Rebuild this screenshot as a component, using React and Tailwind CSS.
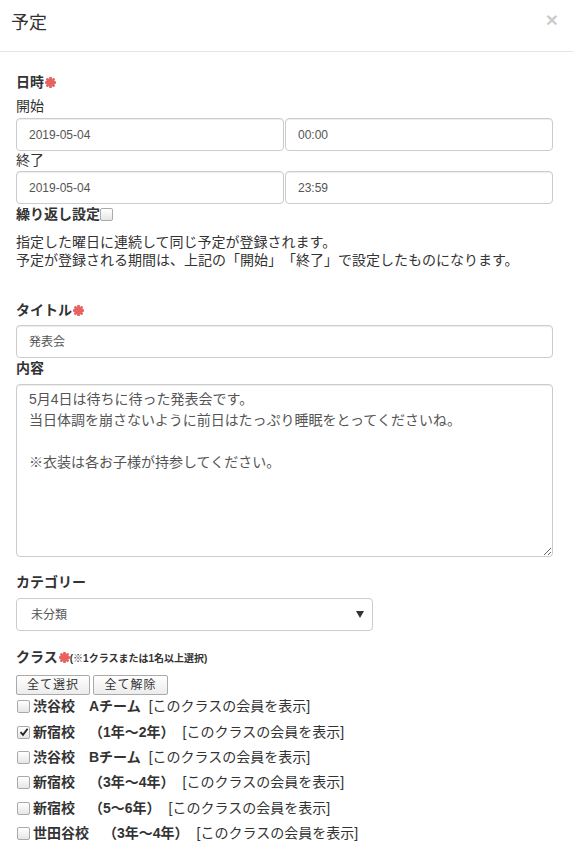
import { useState } from 'react';

const FONT = '"Liberation Sans", "Noto Sans CJK JP", sans-serif';

// 必須マーク
function Required() {
  return (
    <svg width="11" height="11" viewBox="0 0 10 10" className="inline-block align-[-1px] ml-[1px]">
      <g stroke="#e8625f" strokeWidth="2.6" strokeLinecap="round">
        <line x1="5" y1="1" x2="5" y2="9" />
        <line x1="1" y1="5" x2="9" y2="5" />
        <line x1="2.2" y1="2.2" x2="7.8" y2="7.8" />
        <line x1="7.8" y1="2.2" x2="2.2" y2="7.8" />
      </g>
    </svg>
  );
}

function Box({ checked, onClick }) {
  return (
    <span
      onClick={onClick}
      className="inline-flex items-center justify-center w-[13px] h-[13px] border border-[#aaa] rounded-[2px] bg-gradient-to-b from-white to-[#e6e6e6] shrink-0"
    >
      {checked && (
        <svg width="10" height="10" viewBox="0 0 10 10">
          <path d="M1.5 5.2 L4 7.8 L8.6 1.8" fill="none" stroke="#222" strokeWidth="1.8" />
        </svg>
      )}
    </span>
  );
}

function TextInput({ value }) {
  return (
    <div className="h-[33px] border border-[#ccc] rounded-[4px] shadow-[inset_0_1px_1px_rgba(0,0,0,0.075)] flex items-center pl-[12px] text-[12px] text-[#555] bg-white">
      {value}
    </div>
  );
}

const classes = [
  { name: '渋谷校　Aチーム', checked: false },
  { name: '新宿校　（1年～2年）', checked: true },
  { name: '渋谷校　Bチーム', checked: false },
  { name: '新宿校　（3年～4年）', checked: false },
  { name: '新宿校　（5～6年）', checked: false },
  { name: '世田谷校　（3年～4年）', checked: false },
];

export default function App() {
  const [repeat, setRepeat] = useState(false);
  const [checks, setChecks] = useState(classes.map((c) => c.checked));

  const toggle = (i) => setChecks((prev) => prev.map((v, j) => (j === i ? !v : v)));

  return (
    <div
      className="w-[573px] h-[844px] bg-white text-[#333] overflow-hidden [text-spacing-trim:space-all]"
      style={{ fontFamily: FONT }}
    >
      {/* header */}
      <div className="h-[52px] border-b border-[#e5e5e5] flex items-center justify-between pl-[11px] pr-[15px]">
        <h1 className="text-[18px] leading-[20px] -mt-[6px]">予定</h1>
        <span className="text-[21px] font-bold leading-none text-black opacity-20 -mt-[12px]">×</span>
      </div>

      <div className="pl-4 pr-5 pt-[20px]">
        <div className="text-[14px] leading-[20px] font-bold">日時<Required /></div>
        <div className="text-[14px] leading-[20px] mt-[4px]">開始</div>
        <div className="grid grid-cols-2 gap-[1px] mt-[2px]">
          <TextInput value="2019-05-04" />
          <TextInput value="00:00" />
        </div>
        <div className="text-[14px] leading-[18px] mt-0">終了</div>
        <div className="grid grid-cols-2 gap-[1px] mt-[2px]">
          <TextInput value="2019-05-04" />
          <TextInput value="23:59" />
        </div>
        <div className="text-[14px] leading-[20px] font-bold flex items-center">
          繰り返し設定<Box checked={repeat} onClick={() => setRepeat(!repeat)} />
        </div>
        <p className="text-[14px] leading-[18px] mt-[9px]">
          指定した曜日に連続して同じ予定が登録されます。<br />
          予定が登録される期間は、上記の「開始」「終了」で設定したものになります。
        </p>

        <div className="text-[14px] leading-[20px] font-bold mt-[31px]">タイトル<Required /></div>
        <div className="mt-[5px]">
          <TextInput value="発表会" />
        </div>
        <div className="text-[14px] leading-[20px] font-bold">内容</div>
        <textarea
          readOnly
          defaultValue={'5月4日は待ちに待った発表会です。\n当日体調を崩さないように前日はたっぷり睡眠をとってくださいね。\n\n※衣装は各お子様が持参してください。'}
          className="block w-full h-[173px] mt-[6px] border border-[#ccc] rounded-[4px] shadow-[inset_0_1px_1px_rgba(0,0,0,0.075)] px-[12px] pt-[4px] text-[14px] leading-[21px] text-[#555] outline-none [text-spacing-trim:space-all]"
          style={{ fontFamily: FONT }}
        />

        <div className="text-[14px] leading-[20px] font-bold mt-[15px]">カテゴリー</div>
        <div className="w-[357px] h-[33px] mt-[6px] border border-[#ccc] rounded-[4px] flex items-center justify-between pl-[14px] pr-[8px] text-[12px] text-[#555]">
          <span>未分類</span>
          <svg width="8" height="7" viewBox="0 0 8 7">
            <path d="M0 0 H8 L4 7 Z" fill="#333" />
          </svg>
        </div>

        <div className="text-[14px] leading-[20px] font-bold mt-[16px]">
          クラス<Required />
          <span className="text-[10px]">(※1クラスまたは1名以上選択)</span>
        </div>
        <div className="flex gap-[3px] mt-[6px]">
          <button className="w-[74px] h-[20px] border border-[#aaa] rounded-[2px] bg-gradient-to-b from-white to-[#ececec] text-[12px] leading-none text-[#333] tracking-[1px]">
            全て選択
          </button>
          <button className="w-[75px] h-[20px] border border-[#aaa] rounded-[2px] bg-gradient-to-b from-white to-[#ececec] text-[12px] leading-none text-[#333] tracking-[1px]">
            全て解除
          </button>
        </div>
        <ul className="-mt-[1px]">
          {classes.map((c, i) => (
            <li key={c.name} className="h-[25.4px] flex items-center text-[14px]">
              <span className="pl-[1px] pr-[3px] flex items-center">
                <Box checked={checks[i]} onClick={() => toggle(i)} />
              </span>
              <span className="font-bold">{c.name}</span>
              <span className="ml-[8px]">[このクラスの会員を表示]</span>
            </li>
          ))}
        </ul>
      </div>
    </div>
  );
}
